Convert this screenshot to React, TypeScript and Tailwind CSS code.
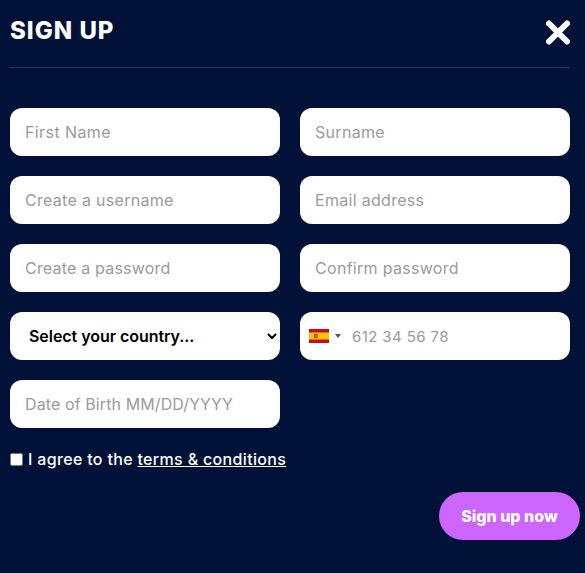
const font = "[font-family:Inter,'Liberation_Sans',sans-serif]";
const inputClass = `h-12 w-full rounded-xl bg-white px-[15px] text-[16px] text-black outline-none placeholder:text-[#9b9b9b] ${font}`;

function Field({ placeholder, spacing = "tracking-[0.3px]" }: { placeholder: string; spacing?: string }) {
  return <input className={`${inputClass} ${spacing}`} placeholder={placeholder} />;
}

function SpainFlag() {
  return (
    <svg width="20" height="14" viewBox="0 0 20 14" aria-hidden="true">
      <rect width="20" height="14" fill="#c60b1e" />
      <rect y="3.5" width="20" height="7" fill="#ffc400" />
      <rect x="5" y="5" width="3.5" height="4" rx="1" fill="#ad1519" />
      <rect x="6" y="6" width="1.5" height="2" fill="#c8b100" />
    </svg>
  );
}

export default function App() {
  return (
    <div className={`h-[573px] w-[585px] overflow-hidden bg-[#021137] ${font}`}>
      <header className="ml-[10px] mr-[15px] flex h-[68px] items-start justify-between border-b border-[#1f3a6b]">
        <h1 className="mt-[16px] text-[24px] leading-[30px] font-extrabold tracking-[1px] text-white [font-family:Inter,sans-serif]">
          SIGN UP
        </h1>
        <svg className="mt-[20px]" width="24" height="25" viewBox="0 0 24 25" aria-hidden="true">
          <path d="M3 3.5 L21 21.5 M21 3.5 L3 21.5" stroke="white" strokeWidth="6" strokeLinecap="round" />
        </svg>
      </header>

      <form className="mt-10 ml-[10px] w-[560px]">
        <div className="grid grid-cols-2 gap-x-5 gap-y-5">
          <Field placeholder="First Name" spacing="tracking-[0.4px]" />
          <Field placeholder="Surname" />
          <Field placeholder="Create a username" />
          <Field placeholder="Email address" />
          <Field placeholder="Create a password" spacing="tracking-[0.2px]" />
          <Field placeholder="Confirm password" />
          <select
            defaultValue=""
            className={`h-12 w-full rounded-xl bg-white pl-[15px] pr-0 text-[16px] font-semibold tracking-[-0.05px] text-black outline-none ${font}`}
          >
            <option value="">Select your country...</option>
            <option value="es">Spain</option>
          </select>
          <div className="flex h-12 items-center rounded-xl bg-white pl-[9px]">
            <SpainFlag />
            <span className="ml-[6px] h-0 w-0 border-x-[3px] border-t-[4px] border-x-transparent border-t-[#555]" />
            <input
              className={`ml-[11px] w-[200px] translate-y-[1px] bg-white text-[15px] tracking-[0.4px] text-black outline-none placeholder:text-[#9b9b9b] ${font}`}
              placeholder="612 34 56 78"
            />
          </div>
          <Field placeholder="Date of Birth MM/DD/YYYY" spacing="tracking-[0.1px]" />
        </div>

        <label className="mt-[22px] flex h-[19px] items-center text-[16px] font-medium tracking-[0.33px] text-white">
          <input type="checkbox" className="m-0 h-[13px] w-[13px]" />
          <span className="ml-[5px] -translate-y-[1px]">
            I agree to the <a className="underline" href="#">terms &amp; conditions</a>
          </span>
        </label>
      </form>

      <div className="mt-[23px] mr-[5px] flex justify-end">
        <button type="button" className="h-12 w-[141px] rounded-3xl bg-[#cc66ff] text-[16px] font-extrabold text-white">
          Sign up now
        </button>
      </div>
    </div>
  );
}
